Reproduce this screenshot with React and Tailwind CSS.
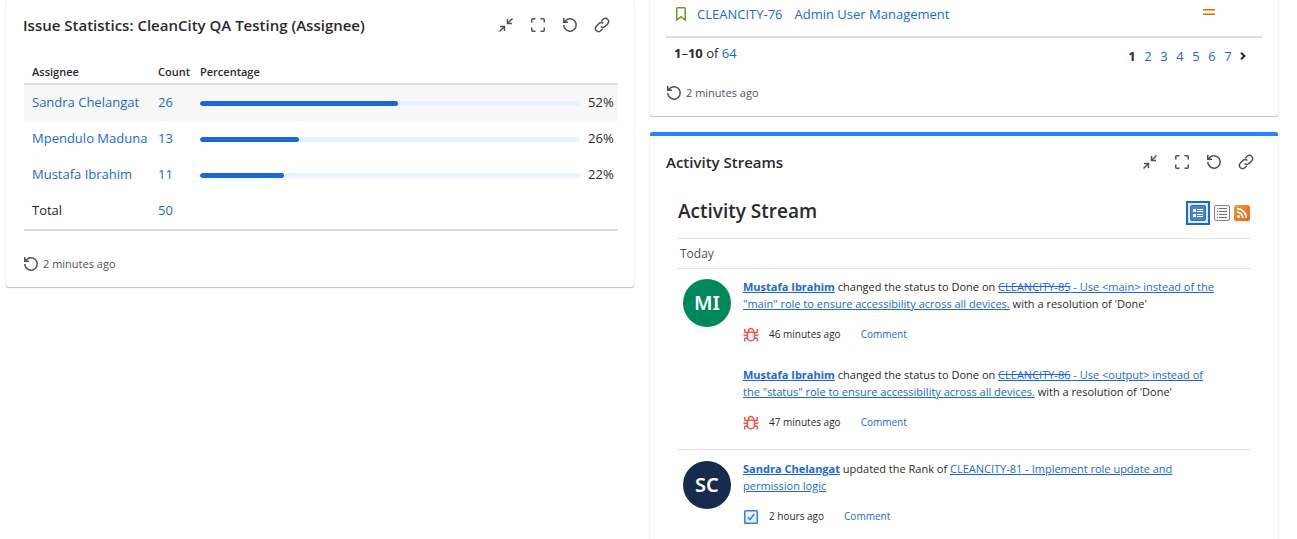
const stroke = {
  fill: 'none',
  stroke: 'currentColor',
  strokeWidth: 1.5,
  viewBox: '0 0 16 16',
  'aria-hidden': true,
};

const ShrinkIcon = () => (
  <svg {...stroke} className="size-4">
    <path d="M14.5 1.5 9.5 6.5M9.5 2v4.5H14M1.5 14.5l5-5M2 9.5h4.5V14" />
  </svg>
);

const MaximizeIcon = () => (
  <svg {...stroke} className="size-4">
    <path d="M1.75 5.5V2.75a1 1 0 0 1 1-1H5.5M10.5 1.75h2.75a1 1 0 0 1 1 1V5.5M14.25 10.5v2.75a1 1 0 0 1-1 1H10.5M5.5 14.25H2.75a1 1 0 0 1-1-1V10.5" />
  </svg>
);

const RefreshIcon = () => (
  <svg {...stroke} className="size-4">
    <path d="M1.75 1v4.25H6M1.9 5.1l1.5-1.4A6.25 6.25 0 1 1 1.75 8" />
  </svg>
);

const LinkIcon = () => (
  <svg {...stroke} className="size-4">
    <path d="M7.2 4.3l2.1-2.1a2.9 2.9 0 0 1 4.2 0l.3.3a2.9 2.9 0 0 1 0 4.2L10.9 9.6a2.9 2.9 0 0 1-4.2 0" />
    <path d="M8.8 11.7l-2.1 2.1a2.9 2.9 0 0 1-4.2 0l-.3-.3a2.9 2.9 0 0 1 0-4.2L5.1 6.4a2.9 2.9 0 0 1 4.2 0" />
  </svg>
);

const StoryIcon = () => (
  <svg {...stroke} className="size-4 text-[#6a9a23]">
    <path d="M3.75 2.5a.75.75 0 0 1 .75-.75h7a.75.75 0 0 1 .75.75V14L8 10.75 3.75 14z" />
  </svg>
);

const BugIcon = () => (
  <svg {...stroke} className="size-4 text-[#f15b50]">
    <path d="M4.5 5.25h7v5a3.5 3.5 0 0 1-7 0zM5.5 5V4a2.5 2.5 0 0 1 5 0v1M4.5 8.25h-4M11.5 8.25h4M4.5 6.25 1.75 5V2M11.5 6.25 14.25 5V2M4.75 10.5l-3 1V14.5M11.25 10.5l3 1V14.5" />
  </svg>
);

const TaskIcon = () => (
  <svg viewBox="0 0 16 16" fill="none" stroke="#357de8" strokeWidth="1.5" className="size-4" aria-hidden="true">
    <rect x="1.75" y="1.75" width="12.5" height="12.5" rx="0.75" fill="#e9f2fe" />
    <path d="M4.75 8.25 7 10.5 11.25 5" />
  </svg>
);

const FullViewIcon = () => (
  <svg viewBox="0 0 16 16" className="size-4" aria-hidden="true">
    <rect x="0.5" y="0.5" width="15" height="15" rx="1.5" fill="#4a86c5" stroke="#3a6ea5" />
    <path fill="#fff" d="M3 4h3v3H3zM3 9h3v3H3zM7 4h6v1H7zM7 6h6v1H7zM7 9h6v1H7zM7 11h6v1H7z" />
  </svg>
);

const ListViewIcon = () => (
  <svg viewBox="0 0 16 16" className="size-4" aria-hidden="true">
    <rect x="0.5" y="0.5" width="15" height="15" rx="1.5" fill="#f7f7f7" stroke="#858585" />
    <path fill="#707070" d="M3 3h1v1H3zM3 6h1v1H3zM3 9h1v1H3zM3 12h1v1H3zM5 3h8v1H5zM5 6h8v1H5zM5 9h8v1H5zM5 12h8v1H5z" />
  </svg>
);

const FeedIcon = () => (
  <svg viewBox="0 0 16 16" className="size-4" aria-hidden="true">
    <defs>
      <linearGradient id="feed" x1="0" y1="0" x2="1" y2="1">
        <stop offset="0" stopColor="#f09a3e" />
        <stop offset="1" stopColor="#e2661c" />
      </linearGradient>
    </defs>
    <rect width="16" height="16" rx="2.5" fill="url(#feed)" />
    <circle cx="4.5" cy="11.5" r="1.5" fill="#fff" />
    <path d="M3 7.2A5.8 5.8 0 0 1 8.8 13M3 3.7A9.3 9.3 0 0 1 12.3 13" fill="none" stroke="#fff" strokeWidth="1.8" />
  </svg>
);

const PriorityIcon = () => (
  <svg viewBox="0 0 12 6" className="mb-1 h-[6px] w-3" role="img" aria-label="Medium priority">
    <path fill="#e06c00" d="M0 0h12v1H0zM0 5h12v1H0z" />
    <path fill="#f3b27a" d="M0 1h12v1H0zM0 4h12v1H0z" />
  </svg>
);

const actions = [
  ['Minimize', ShrinkIcon],
  ['Maximize', MaximizeIcon],
  ['Refresh', RefreshIcon],
  ['Copy link', LinkIcon],
];

function GadgetHeader({ title }) {
  return (
    <header className="flex items-center justify-between">
      <h2 className="text-[15px] leading-5 font-semibold whitespace-nowrap">{title}</h2>
      <div className="flex text-[#505258]">
        {actions.map(([label, Icon]) => (
          <button key={label} type="button" aria-label={label} className="flex size-8 items-center justify-center">
            <Icon />
          </button>
        ))}
      </div>
    </header>
  );
}

function Updated() {
  return (
    <footer className="flex items-center gap-1 text-[11px] leading-5 text-[#505258]">
      <button type="button" aria-label="Refresh">
        <RefreshIcon />
      </button>
      2 minutes ago
    </footer>
  );
}

const link = 'text-[#1868db]';
const shadow = 'shadow-[0_1px_1px_#1e1f2140,0_0_1px_#1e1f214f]';

const assignees = [
  ['Sandra Chelangat', 26, 52],
  ['Mpendulo Maduna', 13, 26],
  ['Mustafa Ibrahim', 11, 22],
];

function IssueStatistics() {
  return (
    <section className={`self-start rounded-b-[3px] bg-white pt-[9px] pr-4 pb-[13px] pl-[17px] ${shadow}`}>
      <GadgetHeader title="Issue Statistics: CleanCity QA Testing (Assignee)" />
      <div className="pt-[23px] pb-[23px] pl-px">
        <table className="w-full border-separate border-spacing-0 border-b-2 border-[#dddee1] text-left text-[13px]">
          <thead>
            <tr className="text-[11px] leading-4">
              <th className="w-[126px] border-b-2 border-[#dddee1] pb-[3px] pl-2 font-semibold">Assignee</th>
              <th className="w-[42px] border-b-2 border-[#dddee1] pb-[3px] pl-2 font-semibold">Count</th>
              <th className="border-b-2 border-[#dddee1] pb-[3px] pl-2 font-semibold">Percentage</th>
            </tr>
          </thead>
          <tbody>
            {assignees.map(([name, count, pct]) => (
              <tr key={name} className="h-9 first:bg-[#f8f8f8]">
                <td className="pl-2 whitespace-nowrap"><a href="#assignee" className={link}>{name}</a></td>
                <td className="pl-2"><a href="#count" className={link}>{count}</a></td>
                <td className="pl-2">
                  <div className="flex items-center gap-2">
                    <div className="h-[5px] flex-1 overflow-hidden rounded-full bg-[#e9f2fe]">
                      <div className="h-full rounded-full bg-[#1868db]" style={{ width: `${pct}%` }} />
                    </div>
                    <span className="w-[30px]">{pct}%</span>
                  </div>
                </td>
              </tr>
            ))}
            <tr className="h-9">
              <td className="pl-2">Total</td>
              <td className="pl-2"><a href="#total" className={link}>50</a></td>
              <td />
            </tr>
          </tbody>
        </table>
      </div>
      <Updated />
    </section>
  );
}

function FilterResults() {
  return (
    <section className={`rounded-b-[3px] bg-white px-4 pb-[13px] ${shadow}`}>
      <div className="flex h-[38px] items-center border-b-2 border-[#dddee1] pr-[47px] pb-2 pl-[7px] text-[13px] leading-5">
        <StoryIcon />
        <a href="#issue" className={`ml-2 ${link}`}>CLEANCITY-76</a>
        <a href="#issue" className={`ml-3 flex-1 ${link}`}>Admin User Management</a>
        <PriorityIcon />
      </div>
      <div className="flex items-start justify-between pt-[5px] pr-4 pl-2 text-[13px] leading-5">
        <p><b>1</b>–<b>10</b> of <a href="#all" className={link}>64</a></p>
        <nav aria-label="Pages" className="flex items-center pt-[3px]">
          <b className="w-4 text-center">1</b>
          {[2, 3, 4, 5, 6, 7].map((n) => (
            <a key={n} href="#page" className={`w-4 text-center ${link}`}>{n}</a>
          ))}
          <a href="#next" aria-label="Next page" className="pl-1">
            <svg viewBox="0 0 6 8" className="h-2 w-[6px]" fill="none" stroke="#292a2e" strokeWidth="2" aria-hidden="true">
              <path d="M1 .8 4.5 4 1 7.2" />
            </svg>
          </a>
        </nav>
      </div>
      <div className="pt-[17px]">
        <Updated />
      </div>
    </section>
  );
}

function Entry({ user, action, issue, struck, lines, tail, Icon, time }) {
  return (
    <article className="pr-[30px] text-[11px] leading-[17px]">
      <p>
        <a href="#user" className={`font-bold underline ${link}`}>{user}</a> {action}{' '}
        <a href="#issue" className={`underline ${link}`}>
          <span className={struck ? 'line-through' : ''}>{issue}</span>
          {lines}
        </a>
        {tail}
      </p>
      <div className="flex items-center pt-[14px] text-[10px] leading-[17px]">
        <Icon />
        <time className="ml-[10px]">{time}</time>
        <a href="#comment" className={`ml-5 ${link}`}>Comment</a>
      </div>
    </article>
  );
}

function Avatar({ initials, color }) {
  return (
    <div className={`mt-px flex size-12 shrink-0 items-center justify-center rounded-full font-['Noto_Sans',sans-serif] text-xl font-semibold text-white ${color}`}>
      {initials}
    </div>
  );
}

function ActivityStreams() {
  return (
    <section className={`flex-1 rounded-t-[3px] border-t-4 border-[#2684ff] bg-white px-4 pt-[10px] ${shadow}`}>
      <GadgetHeader title="Activity Streams" />
      <div className="px-3 pt-[23px]">
        <div className="flex items-start justify-between pb-[13px]">
          <h3 className="text-[19px] leading-5 font-semibold">Activity Stream</h3>
          <div className="flex items-center gap-1">
            <button type="button" aria-label="Full view" className="border-2 border-[#1868db] bg-[#deebff] p-[2px]">
              <FullViewIcon />
            </button>
            <button type="button" aria-label="List view"><ListViewIcon /></button>
            <button type="button" aria-label="Feed"><FeedIcon /></button>
          </div>
        </div>
        <h4 className="h-[31px] border-y border-[#dddee1] pl-[2px] text-xs leading-[29px] text-[#505258]">Today</h4>
        <div className="flex gap-3 border-b border-[#dddee1] pt-[9px] pb-[18px] pl-[5px]">
          <Avatar initials="MI" color="bg-[#00875a]" />
          <div className="flex flex-1 flex-col gap-[23px]">
            <Entry
              user="Mustafa Ibrahim" action="changed the status to Done on" issue="CLEANCITY-85" struck
              lines={' - Use <main> instead of the "main" role to ensure accessibility across all devices.'}
              tail=" with a resolution of 'Done'" Icon={BugIcon} time="46 minutes ago"
            />
            <Entry
              user="Mustafa Ibrahim" action="changed the status to Done on" issue="CLEANCITY-86" struck
              lines={' - Use <output> instead of the "status" role to ensure accessibility across all devices.'}
              tail=" with a resolution of 'Done'" Icon={BugIcon} time="47 minutes ago"
            />
          </div>
        </div>
        <div className="flex gap-3 pt-[10px] pl-[5px]">
          <Avatar initials="SC" color="bg-[#172b4d]" />
          <Entry
            user="Sandra Chelangat" action="updated the Rank of" issue="CLEANCITY-81"
            lines=" - Implement role update and permission logic" Icon={TaskIcon} time="2 hours ago"
          />
        </div>
      </div>
    </section>
  );
}

export default function App() {
  return (
    <main className="grid min-h-screen grid-cols-2 gap-4 bg-white pr-[19px] pl-[6px] font-['Open_Sans','Noto_Sans',sans-serif] text-[#292a2e]">
      <IssueStatistics />
      <div className="flex flex-col gap-4">
        <FilterResults />
        <ActivityStreams />
      </div>
    </main>
  );
}
